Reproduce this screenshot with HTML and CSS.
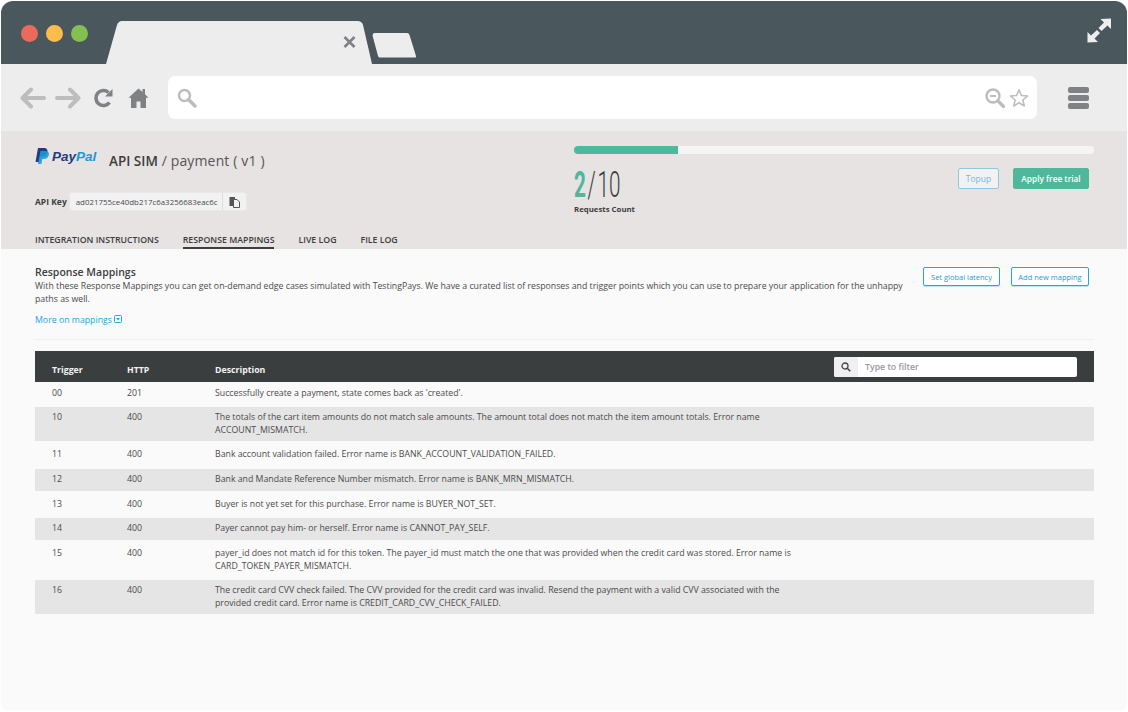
FILE: index.html
```html
<!DOCTYPE html>
<html lang="en">
<head>
  <meta charset="UTF-8">
  <title>API SIM - payment</title>
  <link rel="stylesheet" href="styles.css">
</head>
<body>
  <div class="window">
    <div class="tabbar">
      <div class="lights">
        <span class="light red"></span>
        <span class="light yellow"></span>
        <span class="light green"></span>
      </div>
      <svg class="tab" width="267" height="44" viewBox="0 0 267 44">
        <path d="M0 44 L11 5 Q12.500 1 16 1 L251 1 Q256 1 257 5 L266 44 Z" fill="#ededed"/>
        <path d="M238.500 17 L248.500 27 M248.500 17 L238.500 27" stroke="#7f8185" stroke-width="2.600" fill="none"/>
      </svg>
      <svg class="newtab" width="46" height="27" viewBox="0 0 46 27">
        <path d="M2 2 Q2 1 4 1 L36 1 Q38 1 38.500 3 L45 24 Q45.500 25.500 44 25.500 L9 25.500 Q7.500 25.500 7 24 L1.500 3.500 Z" fill="#ededed"/>
      </svg>
      <svg class="expand" width="25" height="25" viewBox="0 0 25 25">
        <path d="M13.500 1 L24 0.500 L24 11 L20.500 7.500 L14.500 13 L11.500 10 L17 4.500 Z" fill="#eeeeee"/>
        <path d="M0.500 14 L0.500 24.500 L11 24 L7.500 20.500 L13 15 L10 12 L4 17.500 Z" fill="#eeeeee"/>
      </svg>
    </div>

    <div class="toolbar">
      <svg class="nav-icon" width="26" height="22" viewBox="0 0 26 22">
        <path d="M24 11 L3 11 M11 2.500 L2.500 11 L11 19.500" stroke="#bdbdbd" stroke-width="4" stroke-linecap="round" stroke-linejoin="round" fill="none"/>
      </svg>
      <svg class="nav-icon forward" width="26" height="22" viewBox="0 0 26 22">
        <path d="M2 11 L23 11 M15 2.500 L23.500 11 L15 19.500" stroke="#bdbdbd" stroke-width="4" stroke-linecap="round" stroke-linejoin="round" fill="none"/>
      </svg>
      <svg class="nav-icon reload" width="20" height="22" viewBox="0 0 20 22">
        <path d="M16.500 15.500 A7.500 7.500 0 1 1 15.500 5.500" stroke="#7f8185" stroke-width="3.600" fill="none"/>
        <path d="M12 9.500 L19.500 9.500 L19.500 2 Z" fill="#7f8185"/>
      </svg>
      <svg class="nav-icon home" width="21" height="22" viewBox="0 0 21 22">
        <path d="M10.500 1.500 L14.500 5 L14.500 2 L17 2 L17 7.200 L20.500 10.800 L18 10.800 L18 21 L12.500 21 L12.500 14.500 L8.500 14.500 L8.500 21 L3 21 L3 10.800 L0.500 10.800 Z" fill="#7f8185"/>
      </svg>
      <div class="urlbar">
        <svg width="20" height="20" viewBox="0 0 20 20">
          <circle cx="7.500" cy="7.500" r="5.500" stroke="#bdbdbd" stroke-width="2.500" fill="none"/>
          <path d="M11.500 11.500 L18 18" stroke="#bdbdbd" stroke-width="3.400" stroke-linecap="round"/>
        </svg>
        <div class="urlbar-right">
          <svg width="20" height="20" viewBox="0 0 20 20">
            <circle cx="8" cy="8" r="6.500" stroke="#bdbdbd" stroke-width="2.400" fill="none"/>
            <path d="M5 8 L11 8" stroke="#bdbdbd" stroke-width="2"/>
            <path d="M13 13 L18.500 18.500" stroke="#bdbdbd" stroke-width="3.200" stroke-linecap="round"/>
          </svg>
          <svg width="20" height="20" viewBox="0 0 20 20">
            <path d="M10 1.800 L12.400 7.500 L18.500 8 L13.900 12 L15.300 18 L10 14.800 L4.700 18 L6.100 12 L1.500 8 L7.600 7.500 Z" stroke="#bdbdbd" stroke-width="1.600" stroke-linejoin="round" fill="none"/>
          </svg>
        </div>
      </div>
      <div class="burger"><span></span><span></span><span></span></div>
    </div>

    <div class="page-head">
      <div class="head-left">
        <div class="brand">
          <div class="paypal">
            <svg width="14" height="16" viewBox="0 0 14 16">
              <path d="M3 0 L8.500 0 C12 0 13 2 12.300 4.500 C11.500 7.500 9.500 8.500 6.500 8.500 L5 8.500 L4 14 L0.500 14 Z" fill="#253b80"/>
              <path d="M5.500 3 L10 3 C13.500 3 14.500 5 13.700 7.500 C13 10 11 11 8.500 11 L7.200 11 L6.400 16 L3 16 Z" fill="#179bd7" opacity="0.900"/>
            </svg>
            <span class="pp-text"><span class="pay">Pay</span><span class="pal">Pal</span></span>
          </div>
          <div class="api-title"><b>API SIM</b> / payment ( v1 )</div>
        </div>
        <div class="key-row">
          <span class="key-label">API Key</span>
          <div class="key-box">
            <span class="key-value">ad021755ce40db217c6a3256683eac6c</span>
            <span class="key-copy">
              <svg width="11" height="12" viewBox="0 0 11 12">
                <path d="M0.500 1 L6 1 L6 10 L0.500 10 Z" fill="#555"/>
                <path d="M4.500 3.500 L8 3.500 L10.500 6 L10.500 11.500 L4.500 11.500 Z" fill="#f2f2f2" stroke="#555" stroke-width="1"/>
              </svg>
            </span>
          </div>
        </div>
        <div class="tabs">
          <a class="tab-link">INTEGRATION INSTRUCTIONS</a>
          <a class="tab-link active">RESPONSE MAPPINGS</a>
          <a class="tab-link">LIVE LOG</a>
          <a class="tab-link">FILE LOG</a>
        </div>
      </div>
      <div class="head-right">
        <div class="progress"><div class="progress-fill" style="width:20%"></div></div>
        <div class="usage">
          <div>
            <div class="count"><span class="count-now">2</span><span class="count-rest">/</span><span class="count-rest">10</span></div>
            <div class="count-label">Requests Count</div>
          </div>
          <div class="usage-btns">
            <button class="btn btn-topup">Topup</button>
            <button class="btn btn-trial">Apply free trial</button>
          </div>
        </div>
      </div>
    </div>

    <div class="content">
      <div class="intro">
        <div class="intro-text">
          <h2>Response Mappings</h2>
          <p>With these Response Mappings you can get on-demand edge cases simulated with TestingPays. We have a curated list of responses and trigger points which you can use to prepare your application for the unhappy paths as well.</p>
          <a class="more">More on mappings
            <svg width="8" height="8" viewBox="0 0 8 8">
              <rect x="0.500" y="0.500" width="7" height="7" rx="1" fill="none" stroke="#27a4d8"/>
              <path d="M2 3 L6 3 L4 5.500 Z" fill="#27a4d8"/>
            </svg>
          </a>
        </div>
        <div class="intro-btns">
          <button class="btn btn-outline">Set global latency</button>
          <button class="btn btn-outline">Add new mapping</button>
        </div>
      </div>

      <table class="mappings">
        <thead>
          <tr>
            <th class="col-trigger">Trigger</th>
            <th class="col-http">HTTP</th>
            <th class="col-desc">Description</th>
            <th class="col-filter">
              <div class="filter">
                <span class="filter-icon">
                  <svg width="10" height="10" viewBox="0 0 10 10">
                    <circle cx="4" cy="4" r="3" stroke="#444" stroke-width="1.300" fill="none"/>
                    <path d="M6.300 6.300 L9.300 9.300" stroke="#444" stroke-width="1.500"/>
                  </svg>
                </span>
                <span class="filter-input">Type to filter</span>
              </div>
            </th>
          </tr>
        </thead>
        <tbody>
          <tr class="row-first"><td>00</td><td>201</td><td>Successfully create a payment, state comes back as 'created'.</td><td></td></tr>
          <tr class="row-grey row-wrap"><td>10</td><td>400</td><td>The totals of the cart item amounts do not match sale amounts. The amount total does not match the item amount totals. Error name ACCOUNT_MISMATCH.</td><td></td></tr>
          <tr class="row-tall"><td>11</td><td>400</td><td>Bank account validation failed. Error name is BANK_ACCOUNT_VALIDATION_FAILED.</td><td></td></tr>
          <tr class="row-grey"><td>12</td><td>400</td><td>Bank and Mandate Reference Number mismatch. Error name is BANK_MRN_MISMATCH.</td><td></td></tr>
          <tr><td>13</td><td>400</td><td>Buyer is not yet set for this purchase. Error name is BUYER_NOT_SET.</td><td></td></tr>
          <tr class="row-grey"><td>14</td><td>400</td><td>Payer cannot pay him- or herself. Error name is CANNOT_PAY_SELF.</td><td></td></tr>
          <tr class="row-wrap"><td>15</td><td>400</td><td>payer_id does not match id for this token. The payer_id must match the one that was provided when the credit card was stored. Error name is CARD_TOKEN_PAYER_MISMATCH.</td><td></td></tr>
          <tr class="row-grey row-wrap"><td>16</td><td>400</td><td>The credit card CVV check failed. The CVV provided for the credit card was invalid. Resend the payment with a valid CVV associated with the provided credit card. Error name is CREDIT_CARD_CVV_CHECK_FAILED.</td><td></td></tr>
        </tbody>
      </table>
    </div>
  </div>
</body>
</html>
```

FILE: styles.css
```css
html, body {
  margin: 0;
  padding: 0;
  background: #fff;
}
body {
  font-family: 'Open Sans', sans-serif;
  color: #4a4a4a;
  font-size: 8.75px;
}
.window {
  width: 1126px;
  height: 709px;
  margin: 1px 1px 0;
  border-radius: 12px 12px 6px 6px;
  overflow: hidden;
  background: #fafafa;
  display: flex;
  flex-direction: column;
}

/* browser chrome */
.tabbar {
  height: 63px;
  flex: none;
  background: #4a575c;
  display: flex;
  align-items: flex-end;
}
.lights {
  display: flex;
  gap: 8px;
  margin: 0 0 22px 20px;
  width: 85px;
}
.light {
  width: 17px;
  height: 17px;
  border-radius: 50%;
}
.red { background: #ec6a5b; }
.yellow { background: #fdbc4d; }
.green { background: #84bf52; }
.tab { display: block; }
.newtab {
  display: block;
  margin: 0 0 5px -2px;
}
.expand {
  display: block;
  margin: 0 15px 21px auto;
}
.toolbar {
  height: 67px;
  flex: none;
  background: #ededed;
  display: flex;
  align-items: center;
  padding-left: 19px;
}
.nav-icon { display: block; }
.forward { margin-left: 9px; }
.reload { margin-left: 12px; }
.home { margin-left: 15px; }
.urlbar {
  margin-left: 19px;
  width: 869px;
  height: 43px;
  background: #fff;
  border-radius: 7px;
  display: flex;
  align-items: center;
  justify-content: space-between;
  padding: 0 8px 0 9px;
  box-sizing: border-box;
}
.urlbar svg { display: block; }
.urlbar-right {
  display: flex;
  gap: 4px;
}
.burger {
  margin-left: 31px;
  width: 21px;
  display: flex;
  flex-direction: column;
  gap: 2px;
}
.burger span {
  height: 6px;
  border-radius: 2px;
  background: #7f8185;
}

/* api header */
.page-head {
  height: 118px;
  flex: none;
  background: #e6e3e2;
  display: flex;
  box-sizing: border-box;
  padding-left: 34px;
}
.head-left {
  width: 539px;
  flex: none;
  display: flex;
  flex-direction: column;
}
.brand {
  display: flex;
  align-items: flex-start;
  margin-top: 17px;
  height: 28px;
}
.paypal {
  width: 74px;
  display: flex;
  align-items: flex-start;
  gap: 3px;
}
.pp-text {
  font-family: 'Liberation Sans', sans-serif;
  font-weight: bold;
  font-style: italic;
  font-size: 13.500px;
  line-height: 18px;
}
.pay { color: #253b80; }
.pal { color: #179bd7; }
.api-title {
  font-size: 14px;
  line-height: 20px;
  margin-top: 3px;
  color: #555;
  letter-spacing: 0.15px;
}
.api-title b {
  font-size: 13.500px;
  font-weight: 600;
  color: #3b3d3e;
  letter-spacing: 0;
}
.key-row {
  display: flex;
  align-items: center;
  margin-top: 16px;
  gap: 2px;
}
.key-label {
  font-size: 8.500px;
  font-weight: 700;
  color: #3b3d3e;
}
.key-box {
  display: flex;
  height: 19px;
  border-radius: 3px;
  background: #f2f2f2;
  border: 1px solid #eae8e7;
  box-sizing: border-box;
  align-items: center;
}
.key-value {
  width: 152px;
  padding-left: 6px;
  box-sizing: border-box;
  font-size: 7.900px;
  white-space: nowrap;
}
.key-copy {
  width: 23px;
  height: 17px;
  border-left: 1px solid #ddd;
  display: flex;
  align-items: center;
  justify-content: center;
}
.tabs {
  display: flex;
  gap: 24px;
  margin-top: auto;
}
.tab-link {
  font-weight: 600;
  color: #3b3d3e;
  line-height: 12px;
  padding-bottom: 1px;
  border-bottom: 2px solid transparent;
}
.tab-link.active { border-bottom-color: #3b3d3e; }
.head-right {
  width: 520px;
  flex: none;
  padding-top: 15px;
}
.progress {
  height: 8px;
  border-radius: 4px;
  background: #f5f5f5;
  overflow: hidden;
}
.progress-fill {
  height: 100%;
  background: #4fb79b;
}
.usage {
  display: flex;
  justify-content: space-between;
  margin-top: 14px;
}
.count {
  height: 34px;
  line-height: 34px;
  font-family: 'Roboto', sans-serif;
  font-weight: 300;
  font-size: 37px;
  transform: scaleX(0.56);
  transform-origin: left center;
  white-space: nowrap;
  color: #3b3d3e;
}
.count-now {
  color: #4fb79b;
  font-weight: 700;
  margin-right: 3px;
}
.count-rest { margin-right: 3px; }
.count-label {
  font-size: 7.800px;
  font-weight: 700;
  color: #3b3d3e;
  margin-top: 2px;
}
.usage-btns {
  display: flex;
  gap: 14px;
  margin-right: 5px;
}
.btn {
  font-family: inherit;
  box-sizing: border-box;
  border-radius: 2px;
  padding: 0;
  height: 21px;
}
.btn-topup {
  width: 41px;
  font-size: 8.500px;
  background: #f2f2f2;
  border: 1px solid #8fc8dd;
  color: #74b8d8;
}
.btn-trial {
  width: 76px;
  font-size: 8.300px;
  background: #4fb79b;
  border: 1px solid #4fb79b;
  color: #fff;
  font-weight: 600;
}
.btn-outline {
  height: 19px;
  width: 77px;
  font-size: 7.500px;
  background: #fff;
  border: 1px solid #27a4d8;
  box-shadow: 0 1px 0 #bfe3f1;
  color: #1e9bd0;
}
.btn-outline + .btn-outline { width: 78px; }

/* mappings */
.content {
  flex: 1;
  padding: 17px 33px 0 34px;
}
.intro {
  display: flex;
  justify-content: space-between;
  padding-bottom: 12px;
  border-bottom: 1px solid #efefef;
}
.intro-text {
  width: 870px;
}
.intro h2 {
  margin: 0;
  font-size: 10.500px;
  line-height: 12px;
  font-weight: 600;
  color: #3b3d3e;
}
.intro p {
  margin: 2px 0 0;
  line-height: 12.500px;
}
.more {
  display: block;
  margin-top: 9px;
  line-height: 13px;
  color: #27a4d8;
}
.intro-btns {
  display: flex;
  gap: 11px;
  margin: 1px 5px 0 0;
}
.mappings {
  width: 1059px;
  margin-top: 11px;
  border-collapse: separate;
  border-spacing: 0;
  table-layout: fixed;
}
.col-trigger { width: 92px; }
.col-http { width: 88px; }
.col-desc { width: 619px; }
.mappings th {
  height: 31px;
  box-sizing: border-box;
  background: #3b3e3f;
  color: #f2f2f2;
  text-align: left;
  font-weight: 700;
  vertical-align: bottom;
  padding: 0 0 6px;
  line-height: 11px;
}
.mappings th:first-child { padding-left: 17px; }
.mappings th.col-filter {
  vertical-align: middle;
  padding: 0 17px 0 0;
}
.filter {
  display: flex;
  height: 20px;
  border-radius: 2px;
  overflow: hidden;
  background: #fff;
}
.filter-icon {
  width: 24px;
  background: #f0f0f0;
  display: flex;
  align-items: center;
  justify-content: center;
}
.filter-input {
  padding-left: 7px;
  color: #999;
  line-height: 20px;
  font-weight: 600;
}
.mappings td {
  padding: 7px 0 7.500px;
  line-height: 12.500px;
  vertical-align: top;
}
.mappings .row-first td { padding: 5px 0 7.500px; }
.mappings .row-tall td { padding-bottom: 8.500px; }
.mappings .row-wrap td { padding-bottom: 8px; }
.mappings .row-grey td {
  padding-top: 4px;
  padding-bottom: 5.500px;
  background: #e5e5e5;
}
.mappings .row-grey.row-wrap td { padding-bottom: 5px; }
.mappings tr td:first-child { padding-left: 17px; }
.mappings tr td:nth-child(3) { padding-right: 40px; }
```
